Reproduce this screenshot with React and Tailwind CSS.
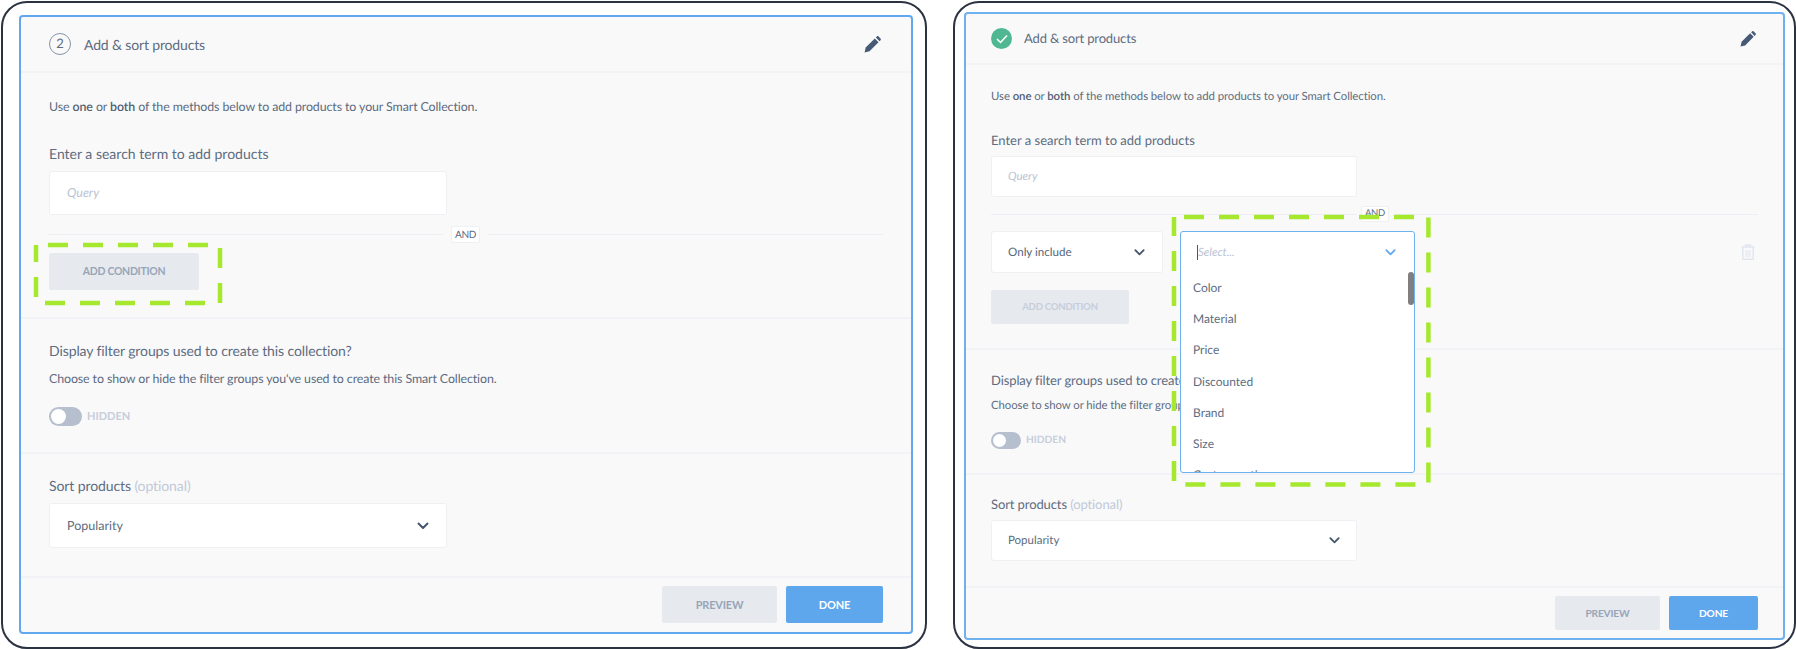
import React from 'react';

const font = "font-['Lato','Noto_Sans',sans-serif] [text-rendering:geometricPrecision]";

const Chevron = ({ className = '', color = '#46566c', size = 14 }) => (
  <svg width={size} height={size} viewBox="0 0 14 14" fill="none" className={className}>
    <path d="M2.5 4.5 7 9l4.5-4.5" stroke={color} strokeWidth="2" strokeLinecap="round" strokeLinejoin="round" />
  </svg>
);

const Pencil = ({ size = 18 }) => (
  <svg width={size} height={size} viewBox="0 0 18 18">
    <path fill="#475a75" d="M0.6 17.4 1.8 12.2 11.4 2.6 15.4 6.6 5.8 16.2Z" />
    <path fill="#475a75" d="M12.5 1.5 13.6 0.5C14.1 0 14.9 0 15.4 0.5L17.5 2.6C18 3.1 18 3.9 17.5 4.4L16.5 5.5Z" />
  </svg>
);

const Trash = () => (
  <svg width="14" height="16" viewBox="0 0 14 16" fill="none" stroke="#e1e5ed" strokeWidth="1.4">
    <path d="M0.5 3h13M4.5 3V1h5v2M1.8 3v12.2h10.4V3" />
    <path d="M5 6v7M7 6v7M9 6v7" strokeWidth="1" />
  </svg>
);

const Toggle = ({ className }) => (
  <div className={`rounded-full bg-[#b5bfce] flex items-center p-[2px] ${className}`}>
    <div className="h-full aspect-square rounded-full bg-white" />
  </div>
);

// green annotation frame drawn over the form
const Dashed = ({ x, y, w, h, offset }) => (
  <svg className="absolute pointer-events-none overflow-visible z-20" style={{ left: x, top: y }} width={w} height={h}>
    <rect x="0" y="0" width={w} height={h} fill="none" stroke="#a5e82d" strokeWidth="4.5" strokeDasharray="20 15" strokeDashoffset={offset} />
  </svg>
);

function LeftCard() {
  return (
    <div className="relative w-[926px] h-[648px] ml-[1px] mt-[1px] shrink-0 rounded-[26px] border-2 border-[#2b3240] bg-white pl-[16px] pt-[12px]">
      <div className="w-[894px] h-[619px] rounded-[4px] border-2 border-[#61a8ef] bg-[#f9f9fa] flex flex-col text-[#5d6c80]">
        <div className="h-[56px] border-b-2 border-[#f2f3f6] pl-[28px] pr-[30px] flex items-center">
          <div className="w-[22px] h-[22px] rounded-full border-[1.5px] border-[#8794a8] flex items-center justify-center text-[13px]">2</div>
          <div className="ml-[13px] text-[14px] tracking-[-0.15px]">Add &amp; sort products</div>
          <div className="ml-auto"><Pencil size={17} /></div>
        </div>
        <div className="h-[246px] border-b-2 border-[#f2f3f6] px-[28px] flex flex-col">
          <p className="mt-[24px] text-[12.4px] leading-[20px] tracking-[-0.1px]">Use <b className="font-semibold text-[#515f73]">one</b> or <b className="font-semibold text-[#515f73]">both</b> of the methods below to add products to your Smart Collection.</p>
          <label className="mt-[27px] text-[14px] leading-[20px]">Enter a search term to add products</label>
          <div className="mt-[7px] w-[398px] h-[44px] shrink-0 rounded-[3px] border border-[#eef0f3] bg-white pl-[17px] pt-px flex items-center text-[12.5px] italic text-[#b9c3d4]">Query</div>
          <div className="mt-[11px] h-[17px] flex items-center">
            <div className="w-[394px] h-px bg-[#eceef3]" />
            <div className="ml-[8px] w-[29px] h-[17px] rounded-[2px] border border-[#eef0f3] bg-white pt-px flex items-center justify-center text-[10px] tracking-[-0.3px]">AND</div>
            <div className="ml-[9px] flex-1 h-px bg-[#eceef3]" />
          </div>
          <button className="mt-[10px] w-[150px] h-[37px] rounded-[2px] bg-[#e6e9ee] pt-px text-[10.5px] tracking-[-0.3px] font-bold text-[#98a5b8]">ADD CONDITION</button>
        </div>
        <div className="h-[135px] border-b-2 border-[#f2f3f6] px-[28px] flex flex-col">
          <div className="mt-[22px] text-[14px] leading-[20px] tracking-[-0.1px]">Display filter groups used to create this collection?</div>
          <p className="mt-[8px] text-[12.4px] leading-[20px] tracking-[-0.1px]">Choose to show or hide the filter groups you've used to create this Smart Collection.</p>
          <div className="mt-[18px] flex items-center">
            <Toggle className="w-[33px] h-[19px]" />
            <span className="ml-[5px] pt-px text-[11px] font-bold text-[#c6cedb]">HIDDEN</span>
          </div>
        </div>
        <div className="h-[124px] border-b-2 border-[#f2f3f6] px-[28px] flex flex-col">
          <div className="mt-[22px] text-[14px] leading-[20px] tracking-[-0.1px]">Sort products <span className="text-[#c0c9d8]">(optional)</span></div>
          <div className="mt-[7px] w-[398px] h-[45px] rounded-[3px] border border-[#eef0f3] bg-white pl-[17px] pr-[16px] flex items-center justify-between text-[12.5px]">
            <span className="pt-px">Popularity</span>
            <Chevron />
          </div>
        </div>
        <div className="flex-1 px-[28px] flex items-start justify-end gap-[9px] pt-[8px]">
          <button className="w-[115px] h-[37px] rounded-[2px] bg-[#e6e9ee] pt-px text-[11px] tracking-[-0.2px] font-bold text-[#98a5b8]">PREVIEW</button>
          <button className="w-[97px] h-[37px] rounded-[2px] bg-[#5ea7ec] pt-px text-[11px] tracking-[-0.2px] font-bold text-white">DONE</button>
        </div>
      </div>
      <Dashed x={32.5} y={241.5} w={184} h={58} offset={23} />
    </div>
  );
}

const options = ['Color', 'Material', 'Price', 'Discounted', 'Brand', 'Size', 'Custom option'];

function RightCard() {
  return (
    <div className="relative w-[843px] h-[648px] ml-[26px] mt-[1px] shrink-0 rounded-[26px] border-2 border-[#2b3240] bg-white pl-[9px] pt-[9px]">
      <div className="w-[821px] h-[628px] rounded-[4px] border-2 border-[#6fb1ef] bg-[#f9f9fa] flex flex-col text-[#5d6c80]">
        <div className="h-[51px] border-b-2 border-[#f2f3f6] pl-[25px] pr-[27px] flex items-center">
          <div className="w-[21px] h-[21px] rounded-full bg-[#4fb893] flex items-center justify-center">
            <svg width="12" height="10" viewBox="0 0 12 10" fill="none"><path d="M1 5l3.5 3.5L11 1.5" stroke="#fff" strokeWidth="1.5" /></svg>
          </div>
          <div className="ml-[12px] pt-px text-[13px] tracking-[-0.15px]">Add &amp; sort products</div>
          <div className="ml-auto"><Pencil size={16} /></div>
        </div>
        <div className="h-[285px] border-b-2 border-[#f2f3f6] px-[25px] flex flex-col">
          <p className="mt-[22px] text-[11.4px] leading-[20px] tracking-[-0.08px]">Use <b className="font-semibold text-[#515f73]">one</b> or <b className="font-semibold text-[#515f73]">both</b> of the methods below to add products to your Smart Collection.</p>
          <label className="mt-[23px] text-[13px] leading-[20px]">Enter a search term to add products</label>
          <div className="mt-[6px] w-[366px] h-[41px] shrink-0 rounded-[3px] border border-[#eef0f3] bg-white pl-[16px] pt-px flex items-center text-[11.5px] italic text-[#b9c3d4]">Query</div>
          <div className="mt-[9px] h-[16px] flex items-center">
            <div className="w-[366px] h-px bg-[#eceef3]" />
            <div className="ml-[4px] w-[28px] h-[16px] rounded-[2px] border border-[#eef0f3] bg-white pt-px flex items-center justify-center text-[9.5px] tracking-[-0.3px]">AND</div>
            <div className="ml-[5px] flex-1 h-px bg-[#eceef3]" />
          </div>
          <div className="mt-[9px] flex items-start">
            <div className="w-[172px] h-[42px] rounded-[3px] border border-[#eef0f3] bg-white pl-[16px] pr-[16px] flex items-center justify-between text-[11.6px] text-[#55657a]">
              <span className="pt-px">Only include</span>
              <Chevron size={13} />
            </div>
            <div className="relative ml-[17px] w-[235px] h-[42px]">
              <div className="absolute inset-x-0 top-0 h-[242px] rounded-[3px] border border-[#6fb1ef] bg-white overflow-hidden z-10">
                <div className="h-[40px] pl-[16px] pr-[17px] flex items-center justify-between">
                  <span className="border-l border-[#48586d] text-[11.5px] italic text-[#b9c3d4] leading-[15px]">Select...</span>
                  <Chevron color="#61a8ef" size={13} />
                </div>
                <div className="pl-[12px] flex flex-col text-[12px] leading-[31.2px]">
                  {options.map(o => <div key={o}>{o}</div>)}
                </div>
                <div className="absolute right-0 top-[40px] w-[6px] h-[33px] rounded-[3px] bg-[#808080]" />
              </div>
            </div>
            <div className="ml-auto mr-[3px] mt-[13px]"><Trash /></div>
          </div>
          <button className="mt-[17px] w-[138px] h-[34px] rounded-[2px] bg-[#e6e9ee] pt-px text-[9.6px] tracking-[-0.25px] font-bold text-[#c6cedb]">ADD CONDITION</button>
        </div>
        <div className="h-[125px] border-b-2 border-[#f2f3f6] px-[25px] flex flex-col">
          <div className="mt-[20px] text-[13px] leading-[20px] tracking-[-0.1px]">Display filter groups used to create this collection?</div>
          <p className="mt-[6px] text-[11.4px] leading-[20px] tracking-[-0.08px]">Choose to show or hide the filter groups you've used to create this Smart Collection.</p>
          <div className="mt-[16px] flex items-center">
            <Toggle className="w-[30px] h-[17px]" />
            <span className="ml-[5px] pt-px text-[10.2px] font-bold text-[#c6cedb]">HIDDEN</span>
          </div>
        </div>
        <div className="h-[113px] border-b-2 border-[#f2f3f6] px-[25px] flex flex-col">
          <div className="mt-[19px] text-[13px] leading-[20px] tracking-[-0.1px]">Sort products <span className="text-[#c0c9d8]">(optional)</span></div>
          <div className="mt-[6px] w-[366px] h-[41px] rounded-[3px] border border-[#eef0f3] bg-white pl-[16px] pr-[15px] flex items-center justify-between text-[11.5px]">
            <span className="pt-px">Popularity</span>
            <Chevron size={13} />
          </div>
        </div>
        <div className="flex-1 px-[25px] flex items-start justify-end gap-[9px] pt-[8px]">
          <button className="w-[105px] h-[34px] rounded-[2px] bg-[#e6e9ee] pt-px text-[10.2px] tracking-[-0.2px] font-bold text-[#98a5b8]">PREVIEW</button>
          <button className="w-[89px] h-[34px] rounded-[2px] bg-[#5ea7ec] pt-px text-[10.2px] tracking-[-0.2px] font-bold text-white">DONE</button>
        </div>
      </div>
      <Dashed x={219.3} y={213.7} w={254.4} h={267.6} offset={25} />
    </div>
  );
}

export default function App() {
  return (
    <div className={`w-[1796px] h-[649px] bg-white flex overflow-hidden ${font}`}>
      <LeftCard />
      <RightCard />
    </div>
  );
}
